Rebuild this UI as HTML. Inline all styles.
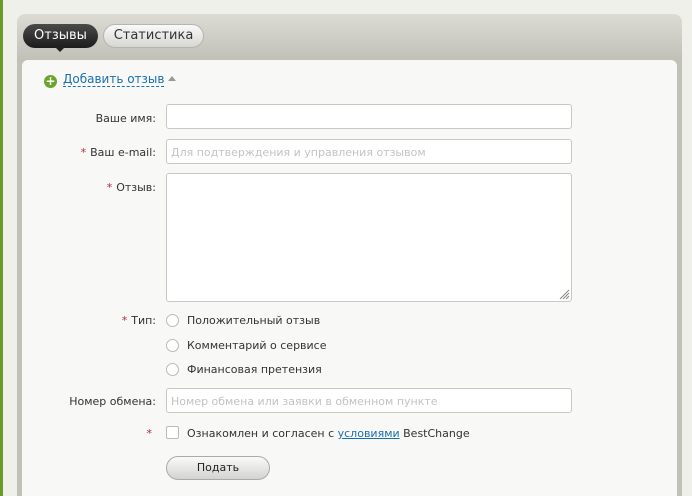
<!DOCTYPE html>
<html style="overflow:hidden;height:496px"><head><meta charset="utf-8"><style>
*{box-sizing:border-box;margin:0;padding:0}
body{width:692px;height:496px;overflow:hidden;background:#f0f0eb;font-family:"DejaVu Sans","Liberation Sans",sans-serif;font-size:11px;color:#333;position:relative}
.gl{position:absolute;left:0;top:0;width:3px;height:496px;background:#6a9a2a}
.outer{position:absolute;left:17px;top:14px;width:665px;height:482px;border-radius:8px 8px 0 0;background:linear-gradient(#dcdcd5,#c1c1b8 45px,#c1c1b8)}
.inner{position:absolute;left:22px;top:60px;width:655px;height:436px;border-radius:6px 6px 0 0;background:#f8f8f7}
.tab{position:absolute;top:24px;height:24px;border-radius:12px;font-size:13px;line-height:24px;text-align:center}
.t1{left:23px;width:75px;background:linear-gradient(#4a4a4a,#1c1c1c);color:#fff}
.t1:after{content:"";position:absolute;left:32px;top:23px;border:5px solid transparent;border-top-color:#222}
.t2{left:103px;width:101px;background:linear-gradient(#fafafa,#d6d6d2);color:#333;border:1px solid #b5b5ae;line-height:22px}
.add{position:absolute;left:44px;top:72px;font-size:12px;color:#1a6fb0}
.add .pl{display:inline-block;width:13px;height:13px;border-radius:50%;background:#6aa52a;color:#fff;font-weight:bold;font-size:12px;line-height:13px;text-align:center;vertical-align:-2px;margin-right:6px}
.add u{text-decoration:none;border-bottom:1px dashed #1a6fb0}
.add i{display:inline-block;border:4px solid transparent;border-bottom:5px solid #999;border-top:0;margin-left:4px;vertical-align:2px}
.lbl{position:absolute;right:536px;text-align:right;white-space:nowrap}
.s{color:#b0283a;margin-right:4px}
.in{position:absolute;left:166px;width:406px;height:25px;background:#fff;border:1px solid #c9c9c4;border-radius:3px;color:#c3c3c3;padding:6px 4px;white-space:nowrap}
.rad{position:absolute;left:166px;width:13px;height:13px;border-radius:50%;border:1px solid #bbb;background:#fff}
.rt{position:absolute;left:187px;white-space:nowrap}
.btn{position:absolute;left:166px;top:456px;width:104px;height:24px;border-radius:12px;border:1px solid #aaa;background:linear-gradient(#fafafa,#d3d3cf);text-align:center;line-height:22px;color:#222}
</style></head><body>
<div class="gl"></div>
<div class="outer"></div>
<div class="inner"></div>
<div class="tab t1">Отзывы</div>
<div class="tab t2">Статистика</div>
<div class="add"><span class="pl">+</span><u>Добавить отзыв</u><i></i></div>

<div class="lbl" style="top:112px">Ваше имя:</div>
<div class="in" style="top:104px"></div>
<div class="lbl" style="top:146px"><span class="s">*</span>Ваш e-mail:</div>
<div class="in" style="top:139px">Для подтверждения и управления отзывом</div>
<div class="lbl" style="top:181px"><span class="s">*</span>Отзыв:</div>
<div class="in" style="top:173px;height:129px">
<svg style="position:absolute;right:1px;bottom:1px" width="12" height="12"><path d="M11 2L2 11M11 5L5 11M11 8L8 11" stroke="#888" stroke-width="1"/></svg></div>

<div class="lbl" style="top:314px"><span class="s">*</span>Тип:</div>
<div class="rad" style="top:314px"></div><div class="rt" style="top:314px">Положительный отзыв</div>
<div class="rad" style="top:339px"></div><div class="rt" style="top:339px">Комментарий о сервисе</div>
<div class="rad" style="top:363px"></div><div class="rt" style="top:363px">Финансовая претензия</div>

<div class="lbl" style="top:395px">Номер обмена:</div>
<div class="in" style="top:388px">Номер обмена или заявки в обменном пункте</div>

<div class="lbl" style="top:427px"><span class="s">*</span></div>
<div class="rad" style="top:426px;border-radius:2px"></div>
<div class="rt" style="top:427px">Ознакомлен и согласен с <span style="color:#1a6fb0;text-decoration:underline">условиями</span> BestChange</div>
<div class="btn">Подать</div>
</body></html>
